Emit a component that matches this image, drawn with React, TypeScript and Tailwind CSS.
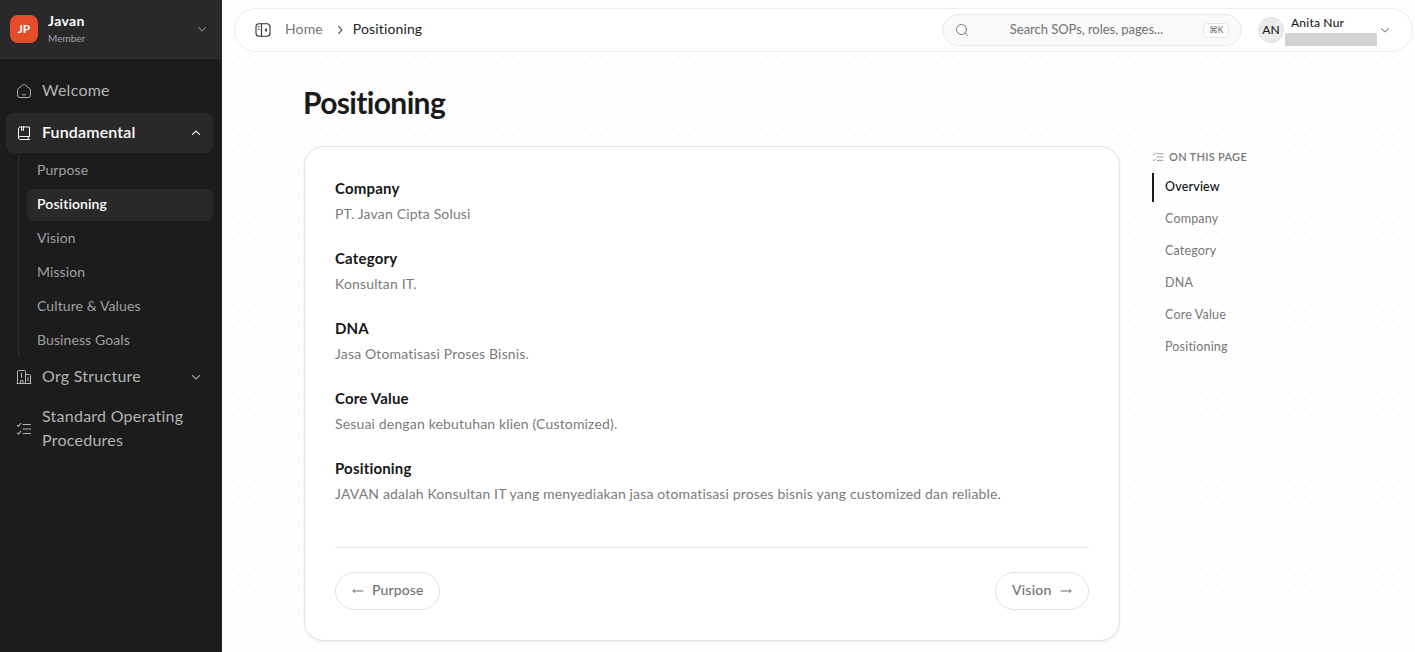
import React from "react";
import clsx from "clsx";

type IconProps = { className?: string };

function Chevron({ className }: IconProps) {
  return (
    <svg viewBox="0 0 12 12" className={clsx("size-3 shrink-0", className)} fill="none" stroke="currentColor" strokeWidth="1.1" strokeLinecap="round" strokeLinejoin="round">
      <path d="M2.500 4.600 6 7.900l3.500-3.300" />
    </svg>
  );
}

function HomeIcon() {
  return (
    <svg viewBox="0 0 16 16" className="size-4 shrink-0" fill="none" stroke="currentColor" strokeWidth="1" strokeLinecap="round" strokeLinejoin="round">
      <path d="M1.600 7.100c0-.7.3-1.200.8-1.600l4.200-3.400c.9-.7 1.900-.7 2.800 0l4.200 3.400c.5.4.8.9.8 1.600v5.100c0 1.600-.8 2.300-2.300 2.300H3.900c-1.500 0-2.300-.7-2.300-2.300z" />
      <path d="M6.400 11.600c1 .7 2.200.7 3.200 0" />
    </svg>
  );
}

function BookIcon() {
  return (
    <svg viewBox="0 0 16 16" className="size-4 shrink-0" fill="none" stroke="currentColor" strokeWidth="1" strokeLinecap="round" strokeLinejoin="round">
      <path d="M2.500 12.800V4c0-1.300.7-2 2-2h9v9.500H4.200c-2.300 0-2.300 3 0 3h9.300" />
      <path d="M12.700 11.500c-.8.900-.8 2.100 0 3M5.500 2v3.500l1-.8 1 .8V2" />
    </svg>
  );
}

function BuildingIcon() {
  return (
    <svg viewBox="0 0 16 16" className="size-4 shrink-0" fill="none" stroke="currentColor" strokeWidth="1" strokeLinecap="round" strokeLinejoin="round">
      <path d="M1.500 14.500V2.500c0-.7.300-1 1-1h6c.7 0 1 .3 1 1v12M9.500 5.500h4c.7 0 1 .3 1 1v8M1 14.500h14" />
      <path d="M4.500 14.500v-3h2.500v3M5.500 4v4.500M12 8.500v3.500" />
    </svg>
  );
}

function ChecklistIcon({ className }: IconProps) {
  return (
    <svg viewBox="0 0 16 16" className={clsx("shrink-0", className)} fill="none" stroke="currentColor" strokeWidth="1.1" strokeLinecap="round" strokeLinejoin="round">
      <path d="M7 3.500h7.500M7 8h7.500M7 12.500h7.500" />
      <path d="M1.500 4.500 2.500 5.300 4.700 2.500M1.500 12.200l1 .9 2.200-2.800" />
    </svg>
  );
}

function PanelIcon() {
  return (
    <svg viewBox="0 0 16 16" className="size-4 shrink-0" fill="none" stroke="currentColor" strokeWidth="1.1" strokeLinecap="round" strokeLinejoin="round">
      <rect x="1" y="1.700" width="14" height="12.600" rx="3" />
      <path d="M6.500 1.700v12.600M3.200 4.700h1M3.200 7.200h1" />
      <path d="M11.300 6.800 10.300 8l1 1.200z" fill="currentColor" />
    </svg>
  );
}

function SearchIcon() {
  return (
    <svg viewBox="0 0 14 14" className="size-3.5 shrink-0 text-[#777]" fill="none" stroke="currentColor" strokeWidth="1" strokeLinecap="round">
      <circle cx="6.500" cy="6.500" r="5" />
      <path d="m10.300 10.300 2.200 2.200" />
    </svg>
  );
}

function Arrow({ className }: IconProps) {
  return (
    <svg viewBox="0 0 12 12" className={clsx("size-3 shrink-0", className)} fill="none" stroke="currentColor" strokeWidth="1" strokeLinecap="round" strokeLinejoin="round">
      <path d="M1 6h10M9.200 4.500 11 6 9.200 7.500" />
    </svg>
  );
}

const pages = ["Purpose", "Positioning", "Vision", "Mission", "Culture & Values", "Business Goals"];

const sections = [
  { title: "Company", body: "PT. Javan Cipta Solusi" },
  { title: "Category", body: "Konsultan IT." },
  { title: "DNA", body: "Jasa Otomatisasi Proses Bisnis." },
  { title: "Core Value", body: "Sesuai dengan kebutuhan klien (Customized)." },
  {
    title: "Positioning",
    body: "JAVAN adalah Konsultan IT yang menyediakan jasa otomatisasi proses bisnis yang customized dan reliable.",
  },
];

const toc = ["Overview", "Company", "Category", "DNA", "Core Value", "Positioning"];

function Sidebar() {
  return (
    <aside className="flex w-[222px] shrink-0 flex-col border-r border-[#2b2b2b] bg-[#1c1c1c] text-[#b4b4b4]">
      <div className="flex h-[59px] items-center border-b border-[#303030] bg-[#292929] pl-2.5 pr-[13px]">
        <div className="flex size-7 items-center justify-center rounded-lg bg-[#e54d2a] text-xs font-bold text-white">JP</div>
        <div className="ml-2.5 flex-1">
          <div className="text-sm font-bold leading-[18px] tracking-[0.4px] text-white">Javan</div>
          <div className="text-[10px] leading-4 text-[#a2a2ae]">Member</div>
        </div>
        <Chevron className="text-[#858585]" />
      </div>
      <nav className="flex flex-col gap-0.5 pl-1.5 pr-2 pt-3 text-base tracking-[0.25px]">
        <a className="flex h-10 items-center gap-2.5 px-2.5">
          <HomeIcon />
          <span className="pb-0.5">Welcome</span>
        </a>
        <div>
          <a className="flex h-10 items-center gap-2.5 rounded-lg bg-[#292929] pl-2.5 pr-[11px] text-white">
            <BookIcon />
            <span className="flex-1 pb-0.5 font-semibold tracking-[0.15px]">Fundamental</span>
            <Chevron className="rotate-180" />
          </a>
          <div className="ml-3 mt-0.5 flex flex-col gap-0.5 border-l border-[#303030] pl-2">
            {pages.map((p) => (
              <a
                key={p}
                className={clsx(
                  "flex h-8 items-center rounded-lg px-2.5 pb-0.5 text-sm tracking-[0.1px]",
                  p === "Positioning" ? "bg-[#292929] font-semibold text-white" : "text-[#a0a0a0]",
                )}
              >
                {p}
              </a>
            ))}
          </div>
          <a className="flex h-10 items-center gap-2.5 pl-2.5 pr-[11px]">
            <BuildingIcon />
            <span className="flex-1 pb-0.5">Org Structure</span>
            <Chevron />
          </a>
        </div>
        <a className="flex items-center gap-2.5 px-2.5 py-[5px] leading-6">
          <ChecklistIcon className="mt-0.5 size-4" />
          Standard Operating Procedures
        </a>
      </nav>
    </aside>
  );
}

function TopBar() {
  return (
    <header className="ml-3 mr-0.5 mt-2 flex h-11 shrink-0 items-center rounded-full border border-[#ededed] bg-white pl-5 pr-[21px]">
      <span className="text-[#333]"><PanelIcon /></span>
      <nav className="ml-[14px] flex items-center text-sm tracking-[0.13px]">
        <span className="pb-0.5 text-[#777]">Home</span>
        <Chevron className="ml-[11px] mr-[7px] -rotate-90 text-[#555]" />
        <span className="pb-0.5 text-[#222]">Positioning</span>
      </nav>
      <div className="ml-auto flex h-8 w-[300px] items-center rounded-full border border-[#e9e9e9] bg-[#fafafa] pl-3 pr-3">
        <SearchIcon />
        <span className="flex-1 pl-px text-center text-[13px] tracking-[-0.04px] text-[#707070]">Search SOPs, roles, pages...</span>
        <kbd className="flex h-[15px] w-[26px] items-center justify-center rounded border border-[#e6e6e6] bg-white font-['Inter','DejaVu_Sans',sans-serif] text-[9px] tracking-[-0.5px] text-[#777]">⌘K</kbd>
      </div>
      <div className="ml-4 flex size-[26px] items-center justify-center rounded-full border border-[#e0e0e0] bg-[#ebebeb] text-xs font-medium text-[#222]">AN</div>
      <div className="ml-[1px] flex w-[92px] flex-col">
        <span className="pl-1.5 text-xs font-medium leading-4 tracking-[0.2px] text-[#1c1c1c]">Anita Nur</span>
        <span className="mt-0.5 h-[13px] bg-[#d1d2d4]" />
      </div>
      <Chevron className="ml-0.5 text-[#888]" />
    </header>
  );
}

export default function App() {
  return (
    <div className="flex h-[652px] overflow-hidden bg-[#fefefe] font-['Lato','Liberation_Sans',sans-serif]">
      <Sidebar />
      <div className="flex min-w-0 flex-1 flex-col">
        <TopBar />
        <main className="flex min-h-0 flex-1 flex-col bg-[radial-gradient(circle,#f5f5f5_1px,transparent_1px)] bg-[size:22px_22px] pl-[82px]">
          <h1 className="-ml-px pt-[30px] text-[30px] font-bold leading-10 tracking-[-0.65px] text-[#1a1a1a]">Positioning</h1>
          <div className="mt-6 flex items-start">
            <article className="h-[495px] w-[816px] rounded-[20px] border border-[#e3e3e3] bg-white px-[30px] pt-[30px] shadow-[0_1px_3px_rgba(0,0,0,0.07)]">
              <div className="flex flex-col gap-5">
                {sections.map((s) => (
                  <section key={s.title}>
                    <h2 className="text-[15px] font-bold leading-[22px] tracking-[0.18px] text-[#161616]">{s.title}</h2>
                    <p className="mt-[2.1px] text-sm leading-[26px] tracking-[0.16px] text-[#7b7b7b]">{s.body}</p>
                  </section>
                ))}
              </div>
              <div className="mt-[39.5px] flex justify-between border-t border-[#e3e3e3] pt-6 text-sm font-medium tracking-[0.1px] text-[#737373]">
                <a className="flex h-[38px] w-[105px] items-center gap-2 rounded-full border border-[#e3e3e3] pl-4">
                  <Arrow className="rotate-180" />
                  <span className="pb-0.5">Purpose</span>
                </a>
                <a className="flex h-[38px] w-[94px] items-center justify-between rounded-full border border-[#e3e3e3] px-4">
                  <span className="pb-0.5 tracking-[0.2px]">Vision</span>
                  <Arrow />
                </a>
              </div>
            </article>
            <aside className="ml-8 w-40">
              <div className="flex h-[22px] items-center gap-[5px] text-[11px] font-semibold tracking-[0.3px] text-[#777]">
                <ChecklistIcon className="size-3 text-[#888]" />
                ON THIS PAGE
              </div>
              <ul className="mt-[5px] flex flex-col">
                {toc.map((t) => (
                  <li
                    key={t}
                    className={clsx(
                      "flex h-8 items-start text-[12.5px] leading-[28px] tracking-[0.18px]",
                      t === "Overview" ? "font-medium text-[#111]" : "text-[#777]",
                    )}
                  >
                    <span className={clsx("mr-[11px] h-[29px] w-0.5", t === "Overview" && "bg-[#1c1c1c]")} />
                    {t}
                  </li>
                ))}
              </ul>
            </aside>
          </div>
        </main>
      </div>
    </div>
  );
}
